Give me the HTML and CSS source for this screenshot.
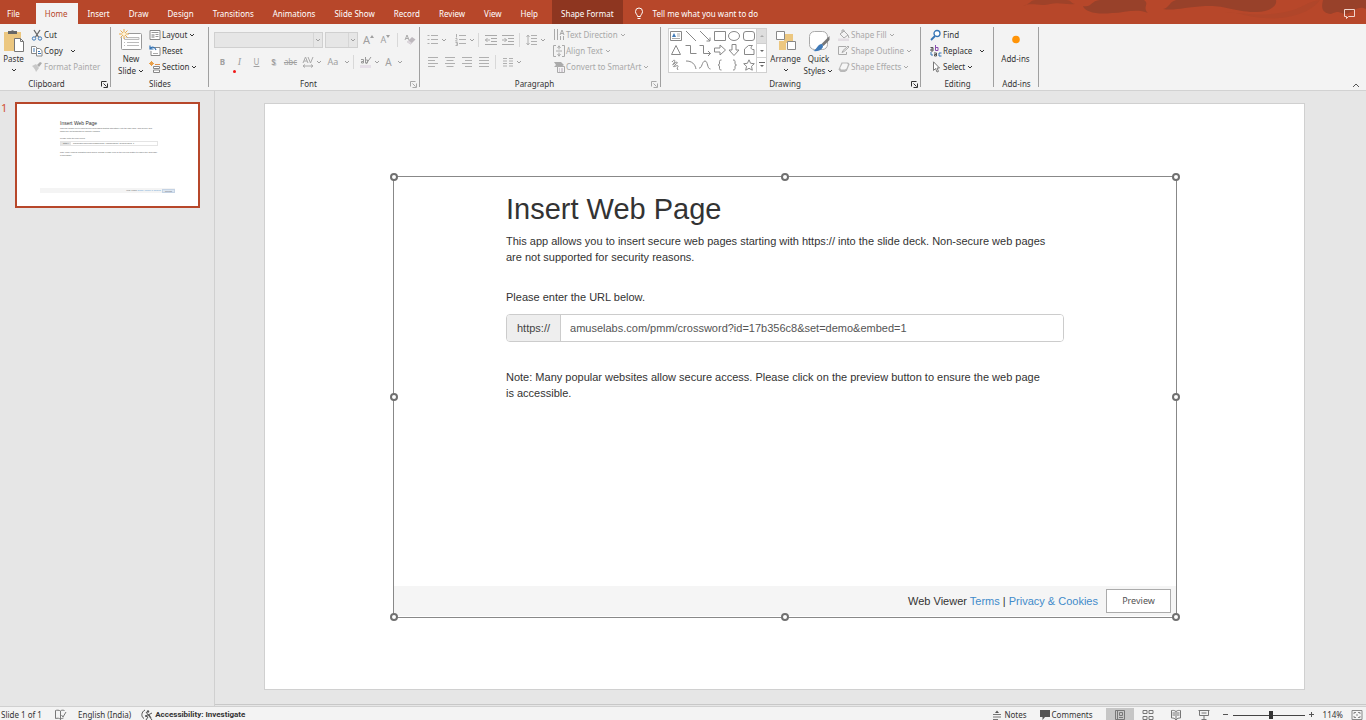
FILE: index.html
```html
<!DOCTYPE html>
<html lang="en">
<head>
<meta charset="utf-8">
<title>Presentation editor</title>
<link rel="stylesheet" href="styles.css">
</head>
<body>
<svg class="defs" aria-hidden="true">
  <symbol id="chev" viewBox="0 0 6 6"><path d="M1 2l2 2 2-2" fill="none" stroke="currentColor"/></symbol>
  <symbol id="launch" viewBox="0 0 7 7"><path d="M.5 5.500v-5h5M2.500 2.500l3 3M6.500 2.500v4h-4" fill="none" stroke="currentColor"/></symbol>
</svg>
<div class="app">
  <header class="titlebar">
    <svg class="art" viewBox="0 0 346 24" aria-hidden="true">
      <path d="M3 6C12 3 10 0 16 0H46C52 0 50 3 55 4 45 5 40 2 30 4 20 7 12 2 3 6z" fill="#9f4229"/>
      <path d="M63 6C72 8 70 1 80 0H124C130 4 122 7 128 13 116 8 105 13 92 13 77 15 65 12 63 6z" fill="#98412a"/>
      <path d="M143 9C149 8 149 2 156 0H256C258 7 246 13 234 12 212 11 205 5 185 6 165 7 155 11 143 9z" fill="#98412a"/>
      <path d="M205 12C225 13 240 17 265 12 285 8 285 2 300 0 290 14 265 20 245 18 225 17 220 12 205 12z" fill="#b0462a"/>
      <path d="M303 0H346V9C338 5 334 12 326 14 318 13 320 10 311 14 300 13 302 5 303 0z" fill="#98412a"/>
    </svg>
    <nav class="tabs">
      <button class="tab file">File</button>
      <button class="tab active">Home</button>
      <button class="tab">Insert</button>
      <button class="tab">Draw</button>
      <button class="tab">Design</button>
      <button class="tab">Transitions</button>
      <button class="tab">Animations</button>
      <button class="tab">Slide Show</button>
      <button class="tab">Record</button>
      <button class="tab">Review</button>
      <button class="tab">View</button>
      <button class="tab">Help</button>
      <button class="tab context">Shape Format</button>
    </nav>
    <button class="tell"><svg width="10" height="14" viewBox="0 0 10 14"><path d="M3.500 9.500C3.500 7.500 1.500 7 1.500 4.500a3.500 3.500 0 0 1 7 0C8.500 7 6.500 7.500 6.500 9.500zM3.500 11.500h3" fill="none" stroke="#fff"/></svg>Tell me what you want to do</button>
    <button class="chat" aria-label="Comments"><svg width="13" height="12" viewBox="0 0 13 12"><path d="M1.500 1.500h10v7h-6l-2 2v-2h-2z" fill="none" stroke="#f0d5cd"/></svg></button>
  </header>

  <section class="ribbon">
    <div class="group clipboard">
      <div class="body">
        <button class="big">
          <svg width="22" height="24" viewBox="0 0 22 24"><path d="M1 3h17v19H1z" fill="#ecc780"/><path d="M5 5V2h3a2 2 0 0 1 3 0h3v3z" fill="#666"/><path d="M11.500 9.500h6l3 3v10h-9z" fill="#fff" stroke="#777"/><path d="M17.500 9.500v3h3" fill="none" stroke="#777"/></svg>
          <span>Paste</span><svg class="chev"><use href="#chev"/></svg>
        </button>
        <div class="stack">
          <button><svg class="ic" viewBox="0 0 12 12"><path d="M3 1l4.500 7M9 1L4.500 8" fill="none" stroke="#666" stroke-width="1.300"/><circle cx="3" cy="9.500" r="1.700" fill="none" stroke="#3f7ab8"/><circle cx="9" cy="9.500" r="1.700" fill="none" stroke="#3f7ab8"/></svg>Cut</button>
          <button><svg class="ic" viewBox="0 0 12 12"><path d="M5 8.500H.5v-7h4l2 2" fill="#fff" stroke="#888"/><path d="M2 4h2M2 6h2" stroke="#3f7ab8"/><path d="M5.500 3.500h3l2.500 2v5.500H5.500z" fill="#fff" stroke="#888"/><path d="M7 6.500h2M7 8.500h3" stroke="#3f7ab8"/></svg>Copy <svg class="chev far"><use href="#chev"/></svg></button>
          <button class="off"><svg class="ic" viewBox="0 0 12 12"><path d="M1 5l4-2 3 4-3 4C4 8 3 7 1 5z" fill="#c8c8c8"/><path d="M6 4l3-3 2 1-3 4z" fill="#aaa"/></svg>Format Painter</button>
        </div>
      </div>
      <div class="label">Clipboard<svg class="launch"><use href="#launch"/></svg></div>
    </div>

    <div class="group slides">
      <div class="body">
        <button class="big">
          <svg width="24" height="24" viewBox="0 0 24 24"><rect x="2.500" y="4.500" width="20" height="16" rx="1" fill="#fff" stroke="#999"/><path d="M9 8.500h11v2H5.500v-2z" fill="#f3f3f3" stroke="#bbb"/><path d="M8 13.500h12M8 16.500h12M5 13.500h1M5 16.500h1" fill="none" stroke="#bbb"/><circle cx="5" cy="5" r="4" fill="#f3f3f3"/><path d="M5 0v10M0 5h10M1.500 1.500l7 7M8.500 1.500l-7 7" stroke="#e9aa4a"/><circle cx="5" cy="5" r="1.800" fill="#fff4d8"/></svg>
          <span>New</span><span class="inl">Slide <svg class="chev"><use href="#chev"/></svg></span>
        </button>
        <div class="stack">
          <button><svg class="ic" viewBox="0 0 12 12"><path d="M1 1.500h10v9H1z" fill="#fff" stroke="#888"/><path d="M2.500 3.500h7M6.500 5.500h3M6.500 7.500h3" stroke="#999"/><path d="M2.500 5h3v4h-3z" fill="#bbb"/></svg>Layout <svg class="chev"><use href="#chev"/></svg></button>
          <button><svg class="ic" viewBox="0 0 12 12"><path d="M4 2.500h7v8H2V6" fill="#fff" stroke="#888"/><path d="M1 .5V4h3.500M1 4c2-3 5-2 6 1" fill="none" stroke="#3474b5" stroke-width="1.200"/><path d="M4 8.500h5" stroke="#aaa"/></svg>Reset</button>
          <button><svg class="ic" viewBox="0 0 12 12"><path d="M0 2.500h5M2.500 0v5M1 1l3 3M4 1L1 4" stroke="#e9a04a"/><path d="M6 3.500h5" stroke="#e0904a"/><path d="M4.500 5.500h6v2h-6zM4.500 9h6v2.500h-6z" fill="#fff" stroke="#888"/></svg>Section <svg class="chev"><use href="#chev"/></svg></button>
        </div>
      </div>
      <div class="label">Slides</div>
    </div>

    <div class="group font">
      <div class="body rows">
        <div class="line">
          <span class="combo name"><select aria-label="Font" disabled></select><svg class="chev"><use href="#chev"/></svg></span>
          <span class="combo size"><select aria-label="Font size" disabled></select><svg class="chev"><use href="#chev"/></svg></span>
          <button class="sq grow" aria-label="Increase font size">A<svg class="mark" viewBox="0 0 4 3"><path d="M0 3l2-3 2 3z"/></svg></button>
          <button class="sq shrink" aria-label="Decrease font size">A<svg class="mark" viewBox="0 0 4 3"><path d="M0 0l2 3 2-3z"/></svg></button>
          <i class="sep"></i>
          <button class="sq" aria-label="Clear formatting"><svg class="ic" viewBox="0 0 12 12"><path d="M1 6l2-5 2 5M2 4.500h2" fill="none" stroke="#aaa"/><path d="M3 8l5-5 3.500 2.500-5 5z" fill="#bdb8bd"/><path d="M3 8l3.500 2.500L8 9 4.500 6.500z" fill="#dcd6dc"/></svg></button>
        </div>
        <div class="line">
          <button class="sq b">B</button><button class="sq i">I</button><button class="sq u">U</button><button class="sq s">S</button><button class="sq k">abc</button>
          <button class="sq" aria-label="Character spacing"><svg class="ic" viewBox="0 0 12 12"><path d="M1 7l2.500-6L6 7M2 5h3M6 1l2.500 6L11 1M1 10h10M3 8.500L1 10l2 1.500M9 8.500l2 1.500-2 1.500" fill="none" stroke="#aaa"/></svg></button><svg class="chev"><use href="#chev"/></svg>
          <button class="sq aa">Aa</button><svg class="chev"><use href="#chev"/></svg>
          <i class="sep"></i>
          <button class="sq" aria-label="Highlight"><svg class="ic" viewBox="0 0 12 12"><path d="M1 3.500h2.500V7H1.500V5.500h2M5.500 1v6h2V4h-2M11 1L6 8" fill="none" stroke="#999"/><path d="M0 9h11v3H0z" fill="#e6dfe8"/></svg></button><svg class="chev"><use href="#chev"/></svg>
          <button class="sq c">A</button><svg class="chev"><use href="#chev"/></svg>
        </div>
        <span class="pointer"></span>
      </div>
      <div class="label">Font<svg class="launch off"><use href="#launch"/></svg></div>
    </div>

    <div class="group para">
      <div class="body">
        <div class="rows">
          <div class="line">
            <button class="sq" aria-label="Bullets"><svg class="ic" viewBox="0 0 12 12"><path d="M4 1.500h7M4 5.500h7M4 9.500h7M.5 1.500h2M.5 5.500h2M.5 9.500h2" stroke="#b0b0b0"/></svg></button><svg class="chev"><use href="#chev"/></svg>
            <button class="sq num" aria-label="Numbering"><svg class="ic" viewBox="0 0 12 12"><path d="M4 1.500h7M4 5.500h7M4 9.500h7M1.500 0v3.500M.5 4.500h1.500v1L.5 7h2M.5 8.500h2v3h-2M1 10h1" fill="none" stroke="#b0b0b0"/></svg></button><svg class="chev"><use href="#chev"/></svg>
            <i class="sep"></i>
            <button class="sq" aria-label="Decrease indent"><svg class="ic" viewBox="0 0 12 12"><path d="M0 1.500h12M6 4.500h6M6 7.500h6M0 10.500h12M5 6H0M2.500 4L.5 6l2 2" fill="none" stroke="#aaa"/></svg></button>
            <button class="sq" aria-label="Increase indent"><svg class="ic" viewBox="0 0 12 12"><path d="M0 1.500h12M6 4.500h6M6 7.500h6M0 10.500h12M0 6h5M2.500 4l2 2-2 2" fill="none" stroke="#aaa"/></svg></button>
            <i class="sep"></i>
            <button class="sq" aria-label="Line spacing"><svg class="ic" viewBox="0 0 12 12"><path d="M5 1.500h6M5 4.500h6M5 7.500h6M5 10.500h6M2 1v10M.5 3L2 1l1.500 2M.5 9L2 11l1.500-2" fill="none" stroke="#b0b0b0"/></svg></button><svg class="chev"><use href="#chev"/></svg>
          </div>
          <div class="line">
            <button class="sq" aria-label="Align left"><svg class="ic" viewBox="0 0 12 12"><path d="M1 1.500h10M1 4.500h7M1 7.500h10M1 10.500h7" stroke="#b0b0b0"/></svg></button>
            <button class="sq" aria-label="Center"><svg class="ic" viewBox="0 0 12 12"><path d="M1 1.500h10M2.500 4.500h7M1 7.500h10M2.500 10.500h7" stroke="#b0b0b0"/></svg></button>
            <button class="sq" aria-label="Align right"><svg class="ic" viewBox="0 0 12 12"><path d="M1 1.500h10M4 4.500h7M1 7.500h10M4 10.500h7" stroke="#b0b0b0"/></svg></button>
            <button class="sq" aria-label="Justify"><svg class="ic" viewBox="0 0 12 12"><path d="M1 1.500h10M1 4.500h10M1 7.500h10M1 10.500h10" stroke="#b0b0b0"/></svg></button>
            <i class="sep"></i>
            <button class="sq" aria-label="Columns"><svg class="ic" viewBox="0 0 12 12"><path d="M1 2.500h4M1 5h4M1 7.500h4M1 10h4M7 2.500h4M7 5h4M7 7.500h4M7 10h4" stroke="#b0b0b0"/></svg></button><svg class="chev"><use href="#chev"/></svg>
          </div>
        </div>
        <div class="stack">
          <button class="off"><svg class="ic" viewBox="0 0 12 12"><path d="M1.500 0v11M4.500 0v11M7.500 7v4M10.500 7v4M7 6l2-5 2 5M7.500 4.500h3" fill="none" stroke="#aaa"/></svg>Text Direction <svg class="chev"><use href="#chev"/></svg></button>
          <button class="off"><svg class="ic" viewBox="0 0 12 12"><path d="M3 .5H.5v11H3M9 .5h2.500v11H9M3 6h6M6 .5v4M6 7.500v4M4.500 3L6 1l1.500 2M4.500 9L6 11l1.500-2" fill="none" stroke="#aaa"/></svg>Align Text <svg class="chev"><use href="#chev"/></svg></button>
          <button class="off"><svg class="ic" viewBox="0 0 12 12"><path d="M1 1h7l3 3-3 2H1l2-2z" fill="#aaa"/><path d="M4.500 5.500h7v6h-7z" fill="#f3f3f3" stroke="#aaa"/><path d="M6 8h1M8 8h2M6 10h1M8 10h2" stroke="#b5a8b8"/></svg>Convert to SmartArt <svg class="chev"><use href="#chev"/></svg></button>
        </div>
      </div>
      <div class="label">Paragraph<svg class="launch off"><use href="#launch"/></svg></div>
    </div>

    <div class="group drawing">
      <div class="body">
        <div class="gallery">
          <div class="shapes">
            <svg viewBox="0 0 12 12"><path d="M.5 1.500h11v9H.5z" fill="#fff"/><path d="M2 7l2-4 2 4z" fill="#3f7ab8" stroke="none"/><path d="M7 4h3M7 6h3M2 8.500h8" stroke="#aaa"/></svg>
            <svg viewBox="0 0 12 12"><path d="M1 1l10 10"/></svg>
            <svg viewBox="0 0 12 12"><path d="M1 1l10 10M11 7.500V11H7.500"/></svg>
            <svg viewBox="0 0 12 12"><path d="M.5 1.500h11v9H.5z"/></svg>
            <svg viewBox="0 0 12 12"><ellipse cx="6" cy="6" rx="5.500" ry="4.500"/></svg>
            <svg viewBox="0 0 12 12"><rect x=".5" y="1.500" width="11" height="9" rx="2.500"/></svg>
            <svg viewBox="0 0 12 12"><path d="M6 1.500l4.500 9h-9z"/></svg>
            <svg viewBox="0 0 12 12"><path d="M.5 1.500h5v8h6"/></svg>
            <svg viewBox="0 0 12 12"><path d="M.5 1.500h4v8h7M9 7l2.500 2.500L9 12"/></svg>
            <svg viewBox="0 0 12 12"><path d="M.5 4h5.500V1l5.500 5L6 11V8H.5z"/></svg>
            <svg viewBox="0 0 12 12"><path d="M4 .5v5.500H1l5 5.500L11 6H8V.5z"/></svg>
            <svg viewBox="0 0 12 12"><path d="M1.500 10.500V5l4-3.500h4C7 3.500 8 6 11 5.500v5z"/></svg>
            <svg viewBox="0 0 12 12"><path d="M2 3c2-3 4-2 2 1S2 6 5 4s3 0 0 2-1 2 1 1 3 0 1 2M7 9l1 2"/></svg>
            <svg viewBox="0 0 12 12"><path d="M1 2c6 0 9 3 10 8"/></svg>
            <svg viewBox="0 0 12 12"><path d="M0 9c3 1 3-7 6-7s2 8 5.500 8"/></svg>
            <svg viewBox="0 0 12 12"><path d="M7.500 1C5 1 5.500 2 5.500 4c0 1.500-.5 2-1.500 2 1 0 1.500.5 1.500 2 0 2-.5 3 2 3"/></svg>
            <svg viewBox="0 0 12 12"><path d="M5 1c2.500 0 2 1 2 3 0 1.500.5 2 1.500 2C7.500 6 7 6.500 7 8c0 2 .5 3-2 3"/></svg>
            <svg viewBox="0 0 12 12"><path d="M6 .8l1.600 3.500 3.700.4-2.800 2.600.8 3.900L6 9.300l-3.300 1.900.8-3.900L.7 4.700l3.700-.4z"/></svg>
          </div>
          <div class="scroll">
            <button class="dim" aria-label="Up"><svg viewBox="0 0 6 6"><path d="M1 4l2-2 2 2z"/></svg></button>
            <button aria-label="Down"><svg viewBox="0 0 6 6"><path d="M1 2l2 2 2-2z"/></svg></button>
            <button aria-label="More"><svg viewBox="0 0 6 6"><path d="M1 3l2 2 2-2zM0 0h6v1H0z"/></svg></button>
          </div>
        </div>
        <button class="big arrange">
          <svg width="22" height="24" viewBox="0 0 22 24"><path d="M9 5h9v9h-7v7H4v-9h5z" fill="#ecc780"/><path d="M1.500 2.500h8v8h-8zM12.500 12.500h8v8h-8z" fill="#fff" stroke="#888"/></svg>
          <span>Arrange</span><svg class="chev"><use href="#chev"/></svg>
        </button>
        <button class="big quick">
          <svg width="22" height="24" viewBox="0 0 22 24"><rect x="1.500" y="2.500" width="18" height="18" rx="5" fill="#fff" stroke="#aaa"/><path d="M21.500 7v4l-6 6-2-2z" fill="#777"/><path d="M14 15c3 3-1 8-9 7 4-1 4-7 9-7z" fill="#3f7ab8"/></svg>
          <span>Quick</span><span class="inl">Styles <svg class="chev"><use href="#chev"/></svg></span>
        </button>
        <div class="stack">
          <button class="off"><svg class="ic" viewBox="0 0 12 12"><path d="M2 5l4-3 4 4-4 3zM4 4V1h2v2M10 6l1 3" fill="none" stroke="#aaa"/><path d="M0 9.500h11V12H0z" fill="#e2dde2"/></svg>Shape Fill <svg class="chev"><use href="#chev"/></svg></button>
          <button class="off"><svg class="ic" viewBox="0 0 12 12"><path d="M8 1.500H.5v8h8V7M4 7.500l1-2 5-4.500 1 1-5 4.500z" fill="none" stroke="#aaa"/></svg>Shape Outline <svg class="chev"><use href="#chev"/></svg></button>
          <button class="off"><svg class="ic" viewBox="0 0 12 12"><path d="M3.500 1.500h6a2 2 0 0 1 2 2L9 9.500 7 11H2.500L.5 8.500z" fill="#b8b8b8"/><path d="M4.500 2.500h4.500l1 1-1.500 4L7 8.500H3L2.200 7z" fill="#f7f7f7"/></svg>Shape Effects <svg class="chev"><use href="#chev"/></svg></button>
        </div>
      </div>
      <div class="label">Drawing<svg class="launch"><use href="#launch"/></svg></div>
    </div>

    <div class="group editing">
      <div class="body">
        <div class="stack">
          <button><svg class="ic" viewBox="0 0 12 12"><circle cx="7" cy="4.500" r="3" fill="#fff" stroke="#3474b5" stroke-width="1.300"/><path d="M5 7l-4 4" stroke="#3474b5" stroke-width="1.800"/></svg>Find</button>
          <button><svg class="ic" viewBox="0 0 12 12"><path d="M.5 2.500H3V6H1V4h2" fill="none" stroke="#555"/><path d="M5.500 0v5.500h2.500v-3H5.500" fill="none" stroke="#8a4db0"/><path d="M4 8h2.500v3H4.500V9.500h2" fill="none" stroke="#555"/><path d="M11.500 8H9v3h2.500M1 7v3h2" fill="none" stroke="#3474b5"/></svg>Replace <svg class="chev far"><use href="#chev"/></svg></button>
          <button><svg class="ic" viewBox="0 0 12 12"><path d="M3.500.8v8.700l2-2 1.500 3.500 1.500-.6L7 7h2.500z" fill="#fff" stroke="#777"/></svg>Select <svg class="chev"><use href="#chev"/></svg></button>
        </div>
      </div>
      <div class="label">Editing</div>
    </div>

    <div class="group addins">
      <div class="body">
        <button class="big"><svg width="22" height="24" viewBox="0 0 22 24"><circle cx="11" cy="10.500" r="3.800" fill="#ff9408"/></svg><span>Add-ins</span></button>
      </div>
      <div class="label">Add-ins</div>
    </div>
    <button class="collapse" aria-label="Collapse ribbon"><svg width="8" height="6" viewBox="0 0 8 6"><path d="M1 5l3-3 3 3" fill="none" stroke="#555"/></svg></button>
  </section>

  <main class="work">
    <aside class="thumbs">
      <span class="no">1</span>
      <div class="thumb">
        <div class="tcontent">
          <div class="th">Insert Web Page</div>
          <p>This app allows you to insert secure web pages starting with https:// into the slide deck. Non-secure web pages are not supported for security reasons.</p>
          <p class="tl">Please enter the URL below.</p>
          <div class="turl"><span>https://</span><span>amuselabs.com/pmm/crossword?id=17b356c8&amp;set=demo&amp;embed=1</span></div>
          <p>Note: Many popular websites allow secure access. Please click on the preview button to ensure the web page is accessible.</p>
        </div>
        <div class="tfoot"><span>Web Viewer <b>Terms | Privacy &amp; Cookies</b></span><em>Preview</em></div>
      </div>
    </aside>
    <div class="canvas">
      <div class="slide">
        <div class="frame">
          <span class="h nw"></span><span class="h n"></span><span class="h ne"></span><span class="h w"></span><span class="h e"></span><span class="h sw"></span><span class="h s"></span><span class="h se"></span>
          <div class="content">
            <h1>Insert Web Page</h1>
            <p>This app allows you to insert secure web pages starting with https:// into the slide deck. Non-secure web pages<br>are not supported for security reasons.</p>
            <label for="url">Please enter the URL below.</label>
            <div class="url"><span>https://</span><input id="url" type="text" value="amuselabs.com/pmm/crossword?id=17b356c8&amp;set=demo&amp;embed=1"></div>
            <p>Note: Many popular websites allow secure access. Please click on the preview button to ensure the web page<br>is accessible.</p>
          </div>
          <footer class="foot"><span>Web Viewer <a href="#">Terms</a> | <a href="#">Privacy &amp; Cookies</a></span><button>Preview</button></footer>
        </div>
      </div>
    </div>
  </main>

  <footer class="status">
    <span class="count">Slide 1 of 1</span>
    <button class="spell" aria-label="Spelling"><svg class="ic" viewBox="0 0 12 12"><path d="M5.500 10.500V2C4 1 2 1 .5 1.500v8c2-.5 4-.5 5 1 1-1.500 2-1 3-1.500M5.500 2c1-1 2-1 4-.5M6.500 6l1.500 2 3-5" fill="none" stroke="#777"/></svg></button>
    <button class="lang">English (India)</button>
    <button class="acc"><svg class="ic" viewBox="0 0 12 12"><path d="M4 1C0 3 0 8 3 9.500M5 3l6 8M11 4L8 5.500 4 7l3 1-2 3M8 5.500L10 9" fill="none" stroke="#555"/><circle cx="7" cy="2.500" r="1.200" fill="#555"/></svg>Accessibility: Investigate</button>
    <div class="right">
      <button class="notes"><svg class="ic" viewBox="0 0 12 12"><path d="M2 5.500h8M2 8h8M2 10.500h5" stroke="#777"/><path d="M4 4l2-2.500L8 4z" fill="#555"/></svg>Notes</button>
      <button class="comments"><svg class="ic" viewBox="0 0 12 12"><path d="M1 1h10v7H6l-2.500 3V8H1z" fill="#555"/></svg>Comments</button>
      <button class="view on" aria-label="Normal view"><svg class="ic" viewBox="0 0 12 12"><path d="M1.500 1.500h9v9h-9zM3.500 1.500v9M5.500 3.500h3v3h-3zM5 8.500h4" fill="none" stroke="#777"/></svg></button>
      <button class="view" aria-label="Slide sorter"><svg class="ic" viewBox="0 0 12 12"><path d="M1 1.500h4v3H1zM7 1.500h4v3H7zM1 7.500h4v3H1zM7 7.500h4v3H7z" fill="none" stroke="#777"/></svg></button>
      <button class="view" aria-label="Reading view"><svg class="ic" viewBox="0 0 12 12"><path d="M6 11V2.500C4 1 3 1.500 1.500 1.500v7.500c2 0 3 0 4.500 2 1.500-2 2.500-2 4.500-2V1.500C9 1.500 8 1 6 2.500M2.500 4H5M2.500 6H5M7 4h2.500M7 6h2.500" fill="none" stroke="#777"/></svg></button>
      <button class="view" aria-label="Slide show"><svg class="ic" viewBox="0 0 12 12"><path d="M.5 1.500h11M1.500 1.500v5h9v-5M6 6.500V10M3.500 10.500h5M3.500 4h5" fill="none" stroke="#777"/></svg></button>
      <button class="zoom" aria-label="Zoom out"><svg width="6" height="6" viewBox="0 0 6 6"><path d="M0 2.500h5" stroke="#555"/></svg></button>
      <input type="range" aria-label="Zoom" min="0" max="100" value="53">
      <button class="zoom" aria-label="Zoom in"><svg width="6" height="6" viewBox="0 0 6 6"><path d="M0 2.500h5M2.500 0v5" stroke="#555"/></svg></button>
      <button class="pct">114%</button>
      <button class="fit" aria-label="Fit slide"><svg class="ic" viewBox="0 0 12 12"><path d="M1 1.500h10v9H1z" fill="none" stroke="#888"/><path d="M3 5V3.500h2M7 3.500h2V5M9 7v1.500H7M5 8.500H3V7M6 5v2" fill="none" stroke="#888"/></svg></button>
    </div>
  </footer>
</div>
</body>
</html>
```
FILE: styles.css
```css
* { box-sizing: border-box; }
body { margin: 0; font-family: "Noto Sans", "Open Sans", sans-serif; font-size: 8px; line-height: 12px; color: #333; background: #e6e6e6; }
button { font: inherit; color: inherit; background: none; border: 0; padding: 0; margin: 0; display: flex; align-items: center; white-space: nowrap; }
svg { flex: none; }
.defs { position: absolute; width: 0; height: 0; }
.app { height: 100vh; display: flex; flex-direction: column; overflow: hidden; }
.ic { width: 12px; height: 12px; }
.chev { width: 6px; height: 6px; }

.titlebar { position: relative; height: 24px; flex: none; display: flex; background: #b7472a; color: #fff; }
.art { position: absolute; right: 0; top: 0; width: 346px; height: 24px; }
.tabs { display: flex; gap: 1px; padding-top: 3px; }
.tab { padding: 0 9px; }
.tab.file { padding: 0 15px 0 7px; }
.tab.active { background: #f3f3f3; color: #b7472a; padding-right: 10px; }
.tab.context { background: #8e3620; margin-top: -3px; padding-top: 3px; margin-left: 4px; }
.tell { gap: 9px; margin-left: 11px; padding-top: 3px; }
.chat { position: relative; margin-left: auto; padding: 3px 10px 0 0; }

.ribbon { flex: none; height: 67px; display: flex; background: #f3f3f3; border-bottom: 1px solid #d2d2d2; }
.group { display: flex; flex-direction: column; flex: none; padding-top: 3px; position: relative; }
.group::after { content: ""; position: absolute; right: 0; top: 3px; bottom: 3px; width: 1px; background: #a0a0a0; }
.body { display: flex; height: 49px; position: relative; }
.label { height: 14px; line-height: 16px; text-align: center; position: relative; padding-right: 18px; }
.launch { position: absolute; right: 3px; top: 5px; width: 7px; height: 7px; }
.clipboard { width: 111px; }
.slides { width: 98px; }
.font { width: 211px; }
.para { width: 241px; }
.drawing { width: 260px; }
.editing { width: 73px; }
.addins { width: 45px; }
.slides .label, .editing .label, .addins .label { padding-right: 0; }
.font .label, .para .label, .drawing .label { padding-right: 12px; }
.off { color: #a8a8a8; }
.big { flex-direction: column; justify-content: flex-start; width: 27px; }
.big .inl { display: flex; align-items: center; gap: 2px; }
.big span { height: 12px; }
.big > svg:first-child { margin-top: 2px; }
.big > .chev { margin-top: 2px; }
.clipboard .stack { margin-left: 4px; }
.slides .big { width: 40px; }
.slides .stack { margin-left: -2px; }
.stack { display: flex; flex-direction: column; }
.stack button { height: 16px; gap: 1px; }
.stack .chev { margin-left: 1px; }
.stack .chev.far { margin-left: 6px; }

.rows { display: flex; flex-direction: column; color: #a0a0a0; }
.line { display: flex; align-items: center; height: 22px; }
.body.rows { padding: 2px 0 0 5px; }
.combo { display: flex; align-items: center; height: 16px; border: 1px solid #d0d0d0; background: #e6e6e6; margin-right: 2px; }
.combo select { flex: 1; min-width: 0; height: 14px; appearance: none; border: 0; border-right: 1px solid #d0d0d0; background: #e6e6e6; border-radius: 0; }
.combo .chev { margin: 0 1px; }
.combo.name { width: 109px; }
.combo.size { width: 33px; }
.sq { width: 17px; height: 17px; justify-content: center; flex: none; }
.sep { width: 1px; height: 14px; background: #d8d8d8; margin: 0 3px; }
.grow { font-size: 11px; }
.shrink { font-size: 9px; }
.mark { width: 4px; height: 3px; margin-bottom: 7px; fill: #a0a0a0; }
.b { font-weight: bold; }
.i { font-style: italic; font-family: "Liberation Serif", serif; font-size: 10px; }
.u { text-decoration: underline; }
.s { font-weight: bold; text-shadow: 1px 1px #ccc; }
.k { text-decoration: line-through; }
.aa { font-size: 9px; width: 22px; }
.c { font-size: 10px; }
.pointer { position: absolute; left: 24px; top: 43px; width: 3px; height: 3px; border-radius: 50%; background: #f01818; }
.para .rows { width: 129px; padding: 2px 0 0 4px; }
.para .stack { margin-left: 4px; }
.para .num { margin-left: 5px; }

.gallery { display: flex; height: 45px; width: 99px; margin: 1px 4px 0 7px; background: #fff; border: 1px solid #d0d0d0; }
.shapes { flex: 1; display: grid; grid-template-columns: repeat(6, 1fr); place-items: center; }
.shapes svg { width: 12px; height: 12px; fill: none; stroke: #888; }
.scroll { width: 10px; display: flex; flex-direction: column; border-left: 1px solid #d0d0d0; }
.scroll button { flex: 1; justify-content: center; border-bottom: 1px solid #d0d0d0; fill: #666; }
.scroll .dim { background: #dedede; fill: #aaa; }
.scroll button:last-child { border-bottom: 0; }
.scroll svg { width: 6px; height: 6px; }
.arrange { width: 29px; }
.quick { width: 29px; margin: 0 5px 0 4px; }
.editing .stack { margin-left: 9px; }
.addins .big { width: 43px; }
.collapse { margin-left: auto; padding: 0 6px 2px 0; align-items: flex-end; }

.work { flex: 1; min-height: 0; display: flex; }
.thumbs { width: 215px; flex: none; display: flex; align-items: flex-start; border-right: 1px solid #d0d0d0; padding: 11px 14px 0 1px; }
.no { width: 14px; color: #d05030; font-size: 11px; }
.thumb { flex: 1; height: 106px; border: 2px solid #b7472a; background: #fff; display: flex; flex-direction: column; justify-content: space-between; padding: 16px 23px 13px; font-family: "Liberation Sans", Arial, sans-serif; font-size: 2px; line-height: 3px; color: #555; }
.tcontent { width: 98px; margin-left: 20px; }
.th { font-size: 5px; line-height: 7px; color: #333; }
.tcontent p { margin: 0; }
.tcontent .tl { margin: 4px 0 1px; }
.turl { display: flex; border: 1px solid #e4e4e4; margin-bottom: 5px; height: 5px; }
.turl span { padding: 0 2px; }
.turl span:first-child { background: #e6e6e6; }
.tfoot { background: #f4f4f4; display: flex; justify-content: flex-end; align-items: center; height: 5px; gap: 1px; }
.tfoot b { font-weight: normal; color: #5b9bd5; }
.tfoot em { font-style: normal; background: #dce6f1; border: 1px solid #c5d3e4; padding: 0 2px; line-height: 2px; }

.canvas { flex: 1; padding: 12px 61px 14px 49px; border-bottom: 1px solid #c8c8c8; margin-bottom: 1px; display: flex; }
.slide { flex: 1; background: #fff; border: 1px solid #d0d0d0; padding: 72px 127px 71px 128px; display: flex; }
.frame { flex: 1; position: relative; border: 1px solid #888; display: flex; flex-direction: column; justify-content: space-between; font-family: "Liberation Sans", Arial, sans-serif; font-size: 11px; line-height: 16px; color: #333; padding-bottom: 1px; }
.h { position: absolute; width: 8px; height: 8px; border: 2px solid #707070; border-radius: 50%; background: #fff; transform: translate(-50%, -50%); }
.nw, .w, .sw { left: 0; }
.n, .s { left: 50%; }
.ne, .e, .se { left: 100%; }
.nw, .n, .ne { top: 0; }
.w, .e { top: 50%; }
.sw, .s, .se { top: 100%; }
.content { padding: 14px 112px 0; }
h1 { margin: 0 0 6px; font-size: 29px; line-height: 36px; font-weight: normal; color: #333; }
.content p { margin: 0 0 24px; white-space: nowrap; }
.content label { display: block; margin-bottom: 9px; }
.url { display: flex; height: 28px; border: 1px solid #ccc; border-radius: 4px; overflow: hidden; margin-bottom: 27px; }
.url span { background: #eee; border-right: 1px solid #ccc; padding: 0 10px; line-height: 26px; color: #444; }
.url input { flex: 1; border: 0; padding: 0 9px; font: inherit; color: #555; background: #fff; outline: 0; }
.foot { background: #f5f5f5; height: 30px; display: flex; align-items: center; justify-content: flex-end; gap: 8px; padding-right: 5px; }
.foot a { color: #428bca; text-decoration: none; }
.foot button { width: 65px; height: 24px; justify-content: center; background: #fff; border: 1px solid #ababab; font-family: "Noto Sans", sans-serif; font-size: 9px; color: #555; }

.status { flex: none; height: 14px; border-top: 1px solid #d0d0d0; background: #f3f3f3; display: flex; align-items: center; padding-top: 3px; }
.count { width: 55px; padding-left: 1px; white-space: nowrap; }
.spell { margin-right: 11px; }
.lang { margin-right: 10px; }
.acc { font-family: Roboto, "Noto Sans", sans-serif; font-weight: bold; gap: 2px; }
.right { margin-left: auto; display: flex; align-items: center; }
.notes { margin-right: 12px; gap: 1px; }
.comments { margin-right: 13px; gap: 1px; }
.view { width: 28px; height: 14px; justify-content: center; }
.view.on { background: #c6c6c6; }
.zoom { width: 12px; height: 10px; justify-content: center; }
.view + .zoom { margin-left: 2px; }
.status input { width: 72px; height: 10px; margin: 0 1px; appearance: none; background: linear-gradient(#444, #444) center / 100% 1px no-repeat; }
.status input::-webkit-slider-thumb { appearance: none; width: 4px; height: 8px; background: #333; border-radius: 0; }
.pct { margin: 0 8px 0 5px; }
.fit { margin-right: 3px; }
```
